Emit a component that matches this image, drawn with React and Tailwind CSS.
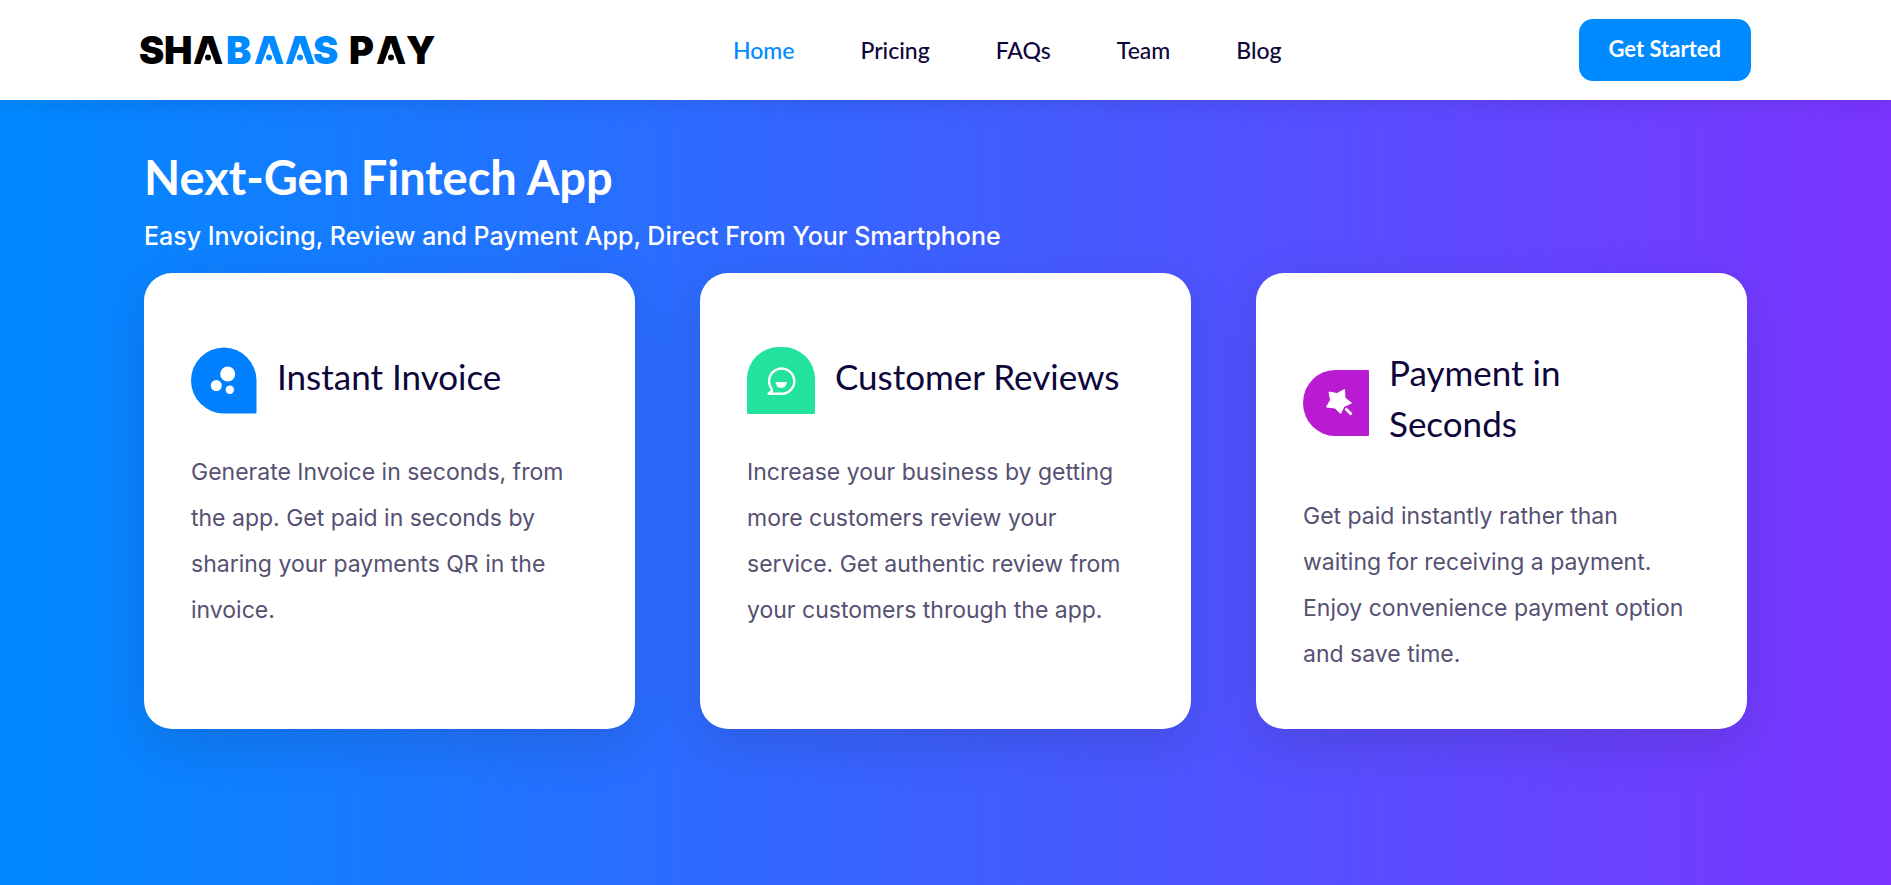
const navLinks = ["Home", "Pricing", "FAQs", "Team", "Blog"];

function Logo() {
  const blue = "#008aff";
  const notches = [
    { x: 68, fill: "#000000" },
    { x: 129, fill: blue },
    { x: 160, fill: blue },
    { x: 251, fill: "#000000" },
  ];
  return (
    <svg
      viewBox="0 0 296 28"
      className="h-7 w-[296px] overflow-visible font-['Inter',sans-serif] text-[38px] font-black"
      role="img"
      aria-label="Shabaas Pay"
    >
      <text y="28" x="-1 24 53 86 114 145 173" fill="#000000">
        SHA<tspan fill={blue}>BAAS</tspan>
      </text>
      <text y="28" x="209 236 266" fill="#000000">
        PAY
      </text>
      {notches.map((n) => (
        <g key={n.x}>
          <path d={`M${n.x} 8 L${n.x + 8} 29 H${n.x - 8} Z`} fill="#ffffff" />
          <circle cx={n.x} cy="21.5" r="3" fill={n.fill} />
        </g>
      ))}
    </svg>
  );
}

function InvoiceIcon() {
  return (
    <svg viewBox="0 0 66 67" className="h-[67px] w-[66px] shrink-0" aria-hidden="true">
      <path d="M33 0.5A33 33 0 0 1 65.500 33V65Q65.500 66.500 64 66.500H33A33 33 0 0 1 33 0.500Z" fill="#0080ff" />
      <circle cx="36.700" cy="27" r="7.500" fill="#fff" />
      <circle cx="25.300" cy="38.500" r="5.500" fill="#fff" />
      <circle cx="38.800" cy="42.700" r="4.200" fill="#fff" />
    </svg>
  );
}

function ReviewIcon() {
  return (
    <svg viewBox="0 0 68 67" className="h-[67px] w-[68px] shrink-0" aria-hidden="true">
      <path d="M0 32A32 32 0 0 1 32 0H36A32 32 0 0 1 68 32V65.500Q68 67 66.500 67H1.500Q0 67 0 65.500Z" fill="#23e29d" />
      <path d="M21.500 46.800H34.500A12.600 12.600 0 1 0 24.500 41.600L25 44Z" fill="none" stroke="#fff" strokeWidth="2.400" strokeLinejoin="round" />
      <path d="M28.500 35H39.800A5.650 6 0 0 1 28.500 35Z" fill="#fff" />
    </svg>
  );
}

function PaymentIcon() {
  return (
    <svg viewBox="0 0 66 66" className="h-[66px] w-[66px] shrink-0" aria-hidden="true">
      <path d="M32 0H65Q66 0 66 1V65Q66 66 65 66H32A32 33 0 0 1 32 0Z" fill="#b91bd3" />
      <path d="M26 22L34 23.500L41.500 19.500L42 28L48.500 33L41 36.500L37.500 43.500L32 38L23.500 37L27.500 30Z" fill="#fff" stroke="#fff" strokeWidth="1" strokeLinejoin="round" />
      <path d="M42.500 38.500L48.500 44.500" stroke="#fff" strokeWidth="2.800" />
    </svg>
  );
}

const features = [
  {
    title: "Instant Invoice",
    Icon: InvoiceIcon,
    text: "Generate Invoice in seconds, from the app. Get paid in seconds by sharing your payments QR in the invoice.",
  },
  {
    title: "Customer Reviews",
    Icon: ReviewIcon,
    text: "Increase your business by getting more customers review your service. Get authentic review from your customers through the app.",
  },
  {
    title: "Payment in Seconds",
    Icon: PaymentIcon,
    text: "Get paid instantly rather than waiting for receiving a payment. Enjoy convenience payment option and save time.",
  },
];

function FeatureCard({ title, text, Icon }) {
  return (
    <article className="rounded-[28px] bg-white px-[47px] pt-[74px] pb-[52px] shadow-[0_16px_48px_rgba(22,28,45,0.15)]">
      <div className="flex min-h-[67px] items-center gap-5">
        <Icon />
        <h2 className="pr-4 pb-[9px] font-['Lato',sans-serif] text-[35px] leading-[51px] text-[#0e063b]">{title}</h2>
      </div>
      <p className="mt-[35px] font-['Inter',sans-serif] text-[23px] leading-[46px] text-[#565072]">{text}</p>
    </article>
  );
}

export default function App() {
  return (
    <div className="flex min-h-screen flex-col font-['Lato',sans-serif]">
      <header className="relative bg-white px-6 shadow-[0_4px_20px_rgba(0,0,0,0.1)]">
        <div className="mx-auto flex h-[100px] max-w-[1611px] items-center justify-between">
          <a href="#home">
            <Logo />
          </a>
          <nav className="flex gap-[66px]" aria-label="Main">
            {navLinks.map((label, i) => (
              <a
                key={label}
                href={"#" + label.toLowerCase()}
                className={
                  i === 0
                    ? "text-[23px] leading-8 font-medium text-[#008aff]"
                    : "text-[23px] leading-8 font-medium text-[#0e063b]"
                }
              >
                {label}
              </a>
            ))}
          </nav>
          <button type="button" className="h-[62px] rounded-[14px] bg-[#008aff] px-[30px] pb-1 text-[22px] font-bold text-white">
            Get Started
          </button>
        </div>
      </header>
      <main className="grow bg-linear-to-r/srgb from-[#008aff] to-[#7b35ff] px-6 pt-[47px] pb-16">
        <div className="mx-auto max-w-[1603px]">
          <h1 className="text-[47px] leading-[60px] font-bold text-white">Next-Gen Fintech App</h1>
          <p className="mt-1.5 font-['Inter',sans-serif] text-[25px] leading-[46px] font-medium text-white">
            Easy Invoicing, Review and Payment App, Direct From Your Smartphone
          </p>
          <div className="mt-[14px] grid grid-cols-1 gap-[65px] lg:grid-cols-3">
            {features.map((f) => (
              <FeatureCard key={f.title} {...f} />
            ))}
          </div>
        </div>
      </main>
    </div>
  );
}
